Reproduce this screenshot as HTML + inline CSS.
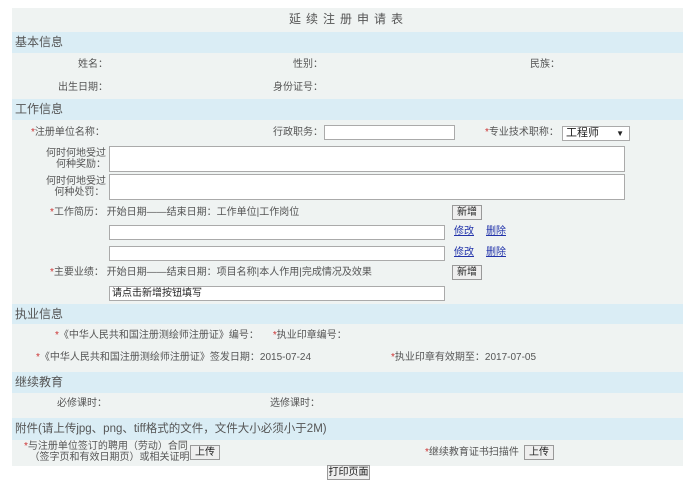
<!DOCTYPE html>
<html><head><meta charset="utf-8"><style>
body{margin:0;width:697px;height:494px;background:#fff;font-family:"Liberation Sans","Noto Sans CJK SC",sans-serif;font-size:10px;color:#555;position:relative;overflow:hidden}
.a{position:absolute;white-space:nowrap;line-height:12px}
.bg{position:absolute;left:12px;width:671px;background:#eff3f2}
.band{position:absolute;left:12px;width:671px;background:#daedf5;font-size:12px;color:#555;line-height:21px;padding-left:3px;box-sizing:border-box}
.r{color:#c33}
.in{position:absolute;background:#fff;border:1px solid #aaa;box-sizing:border-box}
.btn{position:absolute;background:#eee;border:1px solid #999;box-sizing:border-box;font-size:10px;color:#222;text-align:center;line-height:13px}
.lk{color:#2233aa;text-decoration:underline}
</style></head><body>
<div class="bg" style="top:8px;height:458px"></div>
<div class="a" style="left:0;width:697px;text-align:center;top:13px;font-size:12px;letter-spacing:5px;color:#555">延续注册申请表</div>
<div class="band" style="top:32px;height:21px">基本信息</div>
<div class="a" style="left:78px;top:59px">姓名：</div>
<div class="a" style="left:293px;top:59px">性别：</div>
<div class="a" style="left:530px;top:59px">民族：</div>
<div class="a" style="left:58px;top:82px">出生日期：</div>
<div class="a" style="left:273px;top:82px">身份证号：</div>
<div class="band" style="top:99px;height:21px">工作信息</div>
<div class="a" style="left:31px;top:127px"><span class="r">*</span>注册单位名称：</div>
<div class="a" style="left:273px;top:127px">行政职务：</div>
<div class="in" style="left:324px;top:125px;width:131px;height:15px"></div>
<div class="a" style="left:485px;top:127px"><span class="r">*</span>专业技术职称：</div>
<div class="in" style="left:562px;top:126px;width:68px;height:15px;font-size:11px;color:#222;line-height:13px;padding-left:3px">工程师<span style="position:absolute;right:5px;font-size:8px">▼</span></div>
<div class="a" style="left:46px;top:148px;text-align:right;line-height:11px">何时何地受过<br>&nbsp;&nbsp;&nbsp;何种奖励：</div>
<div class="in" style="left:109px;top:146px;width:516px;height:26px"></div>
<div class="a" style="left:46px;top:176px;line-height:11px">何时何地受过<br>&nbsp;&nbsp;&nbsp;何种处罚：</div>
<div class="in" style="left:109px;top:174px;width:516px;height:26px"></div>
<div class="a" style="left:50px;top:207px"><span class="r">*</span>工作简历：&nbsp;开始日期——结束日期：工作单位|工作岗位</div>
<div class="btn" style="left:452px;top:205px;width:30px;height:15px">新增</div>
<div class="in" style="left:109px;top:225px;width:336px;height:15px"></div>
<div class="a lk" style="left:454px;top:226px">修改</div><div class="a lk" style="left:486px;top:226px">删除</div>
<div class="in" style="left:109px;top:246px;width:336px;height:15px"></div>
<div class="a lk" style="left:454px;top:247px">修改</div><div class="a lk" style="left:486px;top:247px">删除</div>
<div class="a" style="left:50px;top:267px"><span class="r">*</span>主要业绩：&nbsp;开始日期——结束日期：项目名称|本人作用|完成情况及效果</div>
<div class="btn" style="left:452px;top:265px;width:30px;height:15px">新增</div>
<div class="in" style="left:109px;top:286px;width:336px;height:15px;color:#222;padding-left:2px;line-height:13px">请点击新增按钮填写</div>
<div class="band" style="top:304px;height:20px;line-height:20px">执业信息</div>
<div class="a" style="left:55px;top:330px"><span class="r">*</span>《中华人民共和国注册测绘师注册证》编号：&nbsp;&nbsp;&nbsp;&nbsp;&nbsp;<span class="r">*</span>执业印章编号：</div>
<div class="a" style="left:36px;top:352px"><span class="r">*</span>《中华人民共和国注册测绘师注册证》签发日期：2015-07-24</div>
<div class="a" style="left:391px;top:352px"><span class="r">*</span>执业印章有效期至：2017-07-05</div>
<div class="band" style="top:372px;height:21px">继续教育</div>
<div class="a" style="left:57px;top:398px">必修课时：</div>
<div class="a" style="left:270px;top:398px">选修课时：</div>
<div class="band" style="top:418px;height:22px;line-height:22px;font-size:11.5px">附件(请上传jpg、png、tiff格式的文件，文件大小必须小于2M)</div>
<div class="a" style="left:24px;top:441px;line-height:11px"><span class="r">*</span>与注册单位签订的聘用（劳动）合同<br>&nbsp;&nbsp;（签字页和有效日期页）或相关证明</div>
<div class="btn" style="left:190px;top:445px;width:30px;height:15px">上传</div>
<div class="a" style="left:425px;top:447px"><span class="r">*</span>继续教育证书扫描件</div>
<div class="btn" style="left:524px;top:445px;width:30px;height:15px">上传</div>
<div class="btn" style="left:327px;top:465px;width:43px;height:15px">打印页面</div>
</body></html>
